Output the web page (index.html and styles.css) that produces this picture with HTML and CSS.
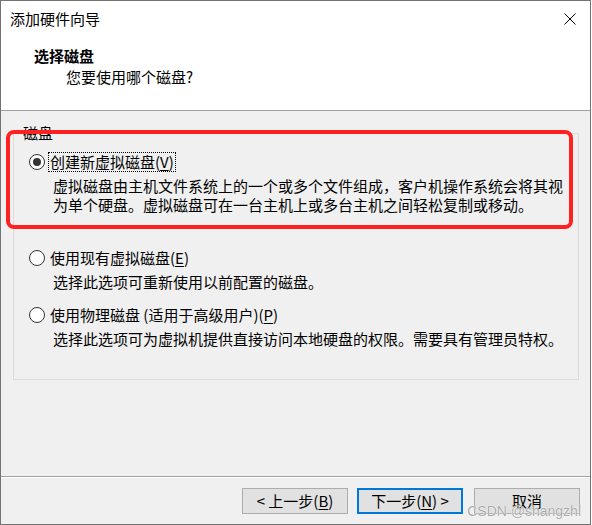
FILE: index.html
```html
<!DOCTYPE html>
<html lang="zh-CN">
<head>
<meta charset="utf-8">
<title>添加硬件向导</title>
<link rel="stylesheet" href="styles.css">
</head>
<body>
<div class="window">
  <div class="header">
    <div class="titlebar">
      <span class="title">添加硬件向导</span>
      <svg class="close" width="12" height="12" viewBox="0 0 12 12" aria-label="关闭">
        <path d="M0.5 0.5 L11.5 11.5 M11.5 0.5 L0.5 11.5" stroke="#000" stroke-width="1" fill="none"/>
      </svg>
    </div>
    <div class="heading">选择磁盘</div>
    <div class="subheading">您要使用哪个磁盘?</div>
  </div>

  <div class="main">
    <fieldset class="group">
      <legend class="legend">磁盘</legend>
      <div class="options">
        <div class="option option-first">
          <div class="row">
            <span class="radio checked"></span>
            <span class="label focus">创建新虚拟磁盘(<u>V</u>)</span>
          </div>
          <p class="desc">虚拟磁盘由主机文件系统上的一个或多个文件组成，客户机操作系统会将其视<br>为单个硬盘。虚拟磁盘可在一台主机上或多台主机之间轻松复制或移动。</p>
        </div>
        <div class="option option-second">
          <div class="row">
            <span class="radio"></span>
            <span class="label">使用现有虚拟磁盘(<u>E</u>)</span>
          </div>
          <p class="desc">选择此选项可重新使用以前配置的磁盘。</p>
        </div>
        <div class="option option-third">
          <div class="row">
            <span class="radio"></span>
            <span class="label">使用物理磁盘 (适用于高级用户)(<u>P</u>)</span>
          </div>
          <p class="desc">选择此选项可为虚拟机提供直接访问本地硬盘的权限。需要具有管理员特权。</p>
        </div>
      </div>
    </fieldset>
  </div>

  <div class="footer">
    <button class="btn btn-back">&lt; 上一步(<u>B</u>)</button>
    <button class="btn btn-next">下一步(<u>N</u>) &gt;</button>
    <button class="btn btn-cancel">取消</button>
  </div>

  <div class="annotation"></div>
  <div class="watermark">CSDN @shangzhl</div>
</div>
</body>
</html>
```

FILE: styles.css
```css
* {
  box-sizing: border-box;
}

html, body {
  margin: 0;
  padding: 0;
  background: #ffffff;
}

body {
  font-family: "Noto Sans CJK SC", "Noto Sans", sans-serif;
  font-size: 15px;
  color: #000000;
}

.window {
  position: relative;
  width: 591px;
  height: 525px;
  border: 1px solid #737373;
  background: #f0f0f0;
  display: flex;
  flex-direction: column;
}

/* ---------- header ---------- */
.header {
  height: 110px;
  background: #ffffff;
  border-bottom: 1px solid #a0a0a0;
  flex: none;
}

.titlebar {
  display: flex;
  justify-content: space-between;
  align-items: flex-start;
  padding: 8px 14px 0 9px;
}

.title {
  line-height: 20px;
}

.close {
  display: block;
  margin-top: 4px;
}

.heading {
  margin-top: 17px;
  padding-left: 33px;
  line-height: 20px;
  font-weight: 700;
}

.subheading {
  margin-top: 1px;
  padding-left: 65px;
  line-height: 20px;
}

/* ---------- main ---------- */
.main {
  flex: 1;
  padding: 12px 0 0 12px;
}

.group {
  margin: 0;
  padding: 0 0 31px 0;
  width: 566px;
  border: 1px solid #dcdcdc;
  min-inline-size: 0;
}

.legend {
  margin-left: 8px;
  padding: 0 1px;
  line-height: 20px;
}

.options {
  padding: 9px 0 0 15px;
}

.option-second {
  margin-top: 34px;
}

.option-third {
  margin-top: 14px;
}

.row {
  display: flex;
  align-items: center;
  height: 20px;
}

.radio {
  width: 16px;
  height: 16px;
  border: 1px solid #333333;
  border-radius: 50%;
  background: #ffffff;
  display: flex;
  align-items: center;
  justify-content: center;
  flex: none;
}

.radio.checked::after {
  content: "";
  width: 8px;
  height: 8px;
  border-radius: 50%;
  background: #333333;
}

.label {
  margin-left: 3px;
  padding: 0 1px;
  line-height: 18px;
  border: 1px dotted transparent;
  white-space: nowrap;
}

.label.focus {
  border-color: #000000;
}

.desc {
  margin: 4px 0 0 24px;
  line-height: 19px;
  white-space: nowrap;
}

u {
  text-decoration: underline;
  text-underline-offset: 2px;
}

/* ---------- footer ---------- */
.footer {
  height: 48px;
  flex: none;
  border-top: 1px solid #a0a0a0;
  box-shadow: inset 0 1px 0 #ffffff;
  display: flex;
  justify-content: flex-end;
  align-items: flex-start;
  padding: 11px 10px 0 0;
}

.btn {
  width: 106px;
  height: 26px;
  padding: 0;
  background: #e1e1e1;
  border: 1px solid #adadad;
  font-family: "Noto Sans CJK SC", "Noto Sans", sans-serif;
  font-size: 15px;
  line-height: 22px;
  color: #000000;
}

.btn-next {
  margin-left: 9px;
  border: 2px solid #0078d7;
}

.btn-cancel {
  margin-left: 11px;
}

/* ---------- overlays ---------- */
.annotation {
  position: absolute;
  left: 5px;
  top: 129px;
  width: 567px;
  height: 99px;
  border: 4px solid #ff2020;
  border-radius: 8px;
  pointer-events: none;
}

.watermark {
  position: absolute;
  right: 9px;
  bottom: 5px;
  font-family: "Liberation Sans", Arial, sans-serif;
  font-size: 14px;
  line-height: 16px;
  color: rgba(140, 140, 140, 0.75);
  text-shadow: 0 0 1px #ffffff, 0 0 1px #ffffff;
  pointer-events: none;
}
```
